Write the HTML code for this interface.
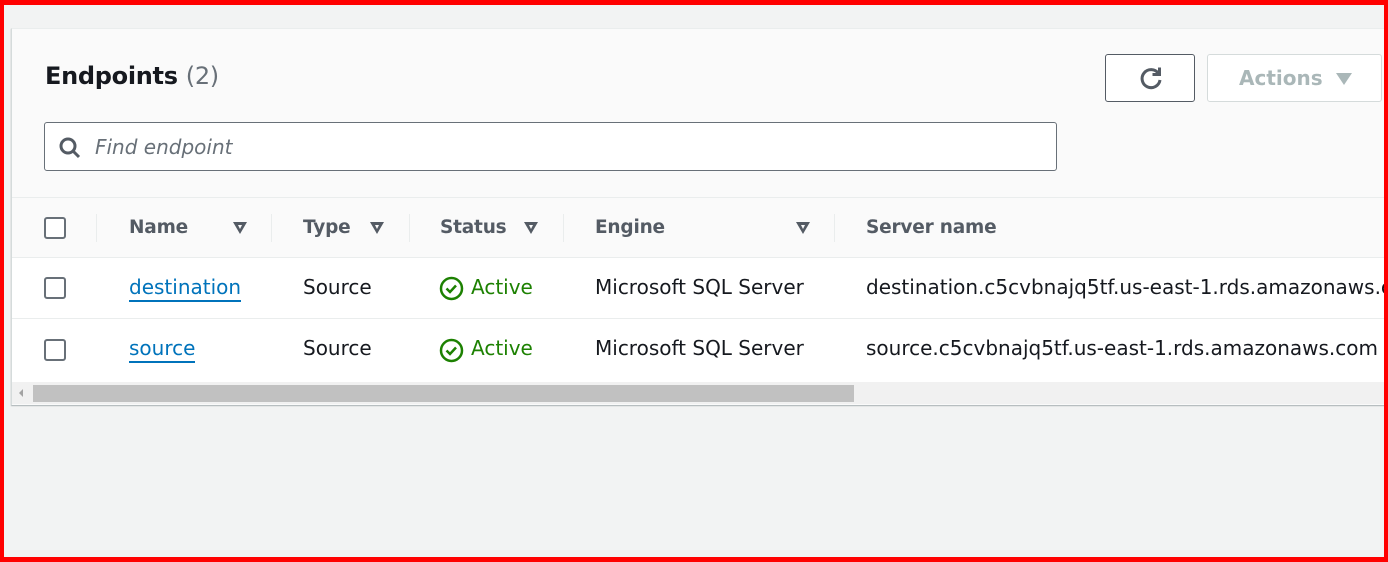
<!DOCTYPE html>
<html><head><meta charset="utf-8"><style>
*{box-sizing:border-box;margin:0;padding:0}
body{width:1388px;height:562px;overflow:hidden;background:#f2f3f3;font-family:"DejaVu Sans","Liberation Sans",sans-serif;position:relative}
.frame{position:absolute;left:0;top:0;width:1388px;height:562px;border:4px solid #f00;border-top-width:5px;border-bottom-width:5px;z-index:10;pointer-events:none}
.card{position:absolute;left:11px;top:28px;width:1377px;height:377px;background:#fafafa;border-left:1px solid #d5dbdb;border-top:1px solid #eaeded;box-shadow:0 1px 1px rgba(0,28,36,.3);overflow:hidden}
.abs{position:absolute}
h1{position:absolute;left:33px;top:33px;font-size:24px;font-weight:bold;color:#16191f;white-space:nowrap;letter-spacing:-0.3px}
h1 span{font-weight:normal;color:#687078}
.search{position:absolute;left:32px;top:93px;width:1013px;height:49px;background:#fff;border:1px solid #687078;border-radius:3px}
.search .ph{position:absolute;left:50px;top:12px;font-size:20px;font-style:italic;color:#687078}
.btn{position:absolute;top:25px;height:48px;border-radius:3px;background:#fff}
.hdr{position:absolute;left:0;top:168px;width:1376px;height:61px;border-top:1px solid #eaeded;border-bottom:1px solid #eaeded}
.row{position:absolute;left:0;width:1376px;height:62px;background:#fff;border-bottom:1px solid #eaeded}
.cb{position:absolute;left:32px;width:22px;height:22px;border:2px solid #687078;border-radius:3px;background:#fff}
.th{position:absolute;top:19px;font-size:18.5px;font-weight:bold;color:#545b64;white-space:nowrap;letter-spacing:-0.2px}
.tri{position:absolute;top:24px;width:0;height:0;border-left:7px solid transparent;border-right:7px solid transparent;border-top:12px solid #545b64}
.tri:after{content:"";position:absolute;left:-2px;top:-9px;border-left:2px solid transparent;border-right:2px solid transparent;border-top:4px solid #fafafa}
.div{position:absolute;top:16px;width:1px;height:28px;background:#eaeded}
.td{position:absolute;top:17px;font-size:20px;color:#16191f;white-space:nowrap}
.lnk{color:#0073bb;border-bottom:2px solid #0073bb;padding-bottom:1px}
.act{color:#1d8102}
</style></head><body>
<div class="frame"></div>
<div class="card">
<h1>Endpoints <span>(2)</span></h1>
<div class="search">
<svg class="abs" style="left:13px;top:13px" width="24" height="24" viewBox="0 0 24 24"><circle cx="10" cy="10" r="7" fill="none" stroke="#545b64" stroke-width="3"/><line x1="15" y1="15" x2="21" y2="21" stroke="#545b64" stroke-width="3"/></svg>
<div class="ph">Find endpoint</div></div>
<div class="btn" style="left:1093px;width:90px;border:1px solid #545b64">
<svg class="abs" style="left:31px;top:10px" width="28" height="28" viewBox="0 0 28 28"><path d="M21.5 8.5 A9 9 0 1 0 23 15" fill="none" stroke="#545b64" stroke-width="3"/><path d="M15.5 9.5 L22.5 9.5 L22.5 2.5" fill="none" stroke="#545b64" stroke-width="3"/></svg></div>
<div class="btn" style="left:1195px;width:175px;border:1px solid #d5dbdb">
<span class="abs" style="left:31px;top:11px;font-size:20px;font-weight:bold;color:#aab7b8">Actions</span>
<div class="abs" style="left:128px;top:18px;border-left:8px solid transparent;border-right:8px solid transparent;border-top:12px solid #aab7b8"></div></div>

<div class="hdr">
<div class="cb" style="top:19px"></div>
<div class="div" style="left:84px"></div>
<div class="th" style="left:117px">Name</div><div class="tri" style="left:221px"></div>
<div class="div" style="left:259px"></div>
<div class="th" style="left:291px">Type</div><div class="tri" style="left:358px"></div>
<div class="div" style="left:397px"></div>
<div class="th" style="left:428px">Status</div><div class="tri" style="left:512px"></div>
<div class="div" style="left:551px"></div>
<div class="th" style="left:583px">Engine</div><div class="tri" style="left:784px"></div>
<div class="div" style="left:822px"></div>
<div class="th" style="left:854px">Server name</div>
</div>

<div class="row" style="top:229px;height:61px">
<div class="cb" style="top:19px"></div>
<div class="td" style="left:117px"><span class="lnk">destination</span></div>
<div class="td" style="left:291px">Source</div>
<svg class="abs" style="left:427px;top:18px" width="25" height="25" viewBox="0 0 25 25"><circle cx="12.5" cy="12.5" r="10.5" fill="none" stroke="#1d8102" stroke-width="2.5"/><path d="M7.5 12.5 L11 16 L17 9.5" fill="none" stroke="#1d8102" stroke-width="2.5"/></svg>
<div class="td act" style="left:459px">Active</div>
<div class="td" style="left:583px">Microsoft SQL Server</div>
<div class="td" style="left:854px">destination.c5cvbnajq5tf.us-east-1.rds.amazonaws.com</div>
</div>
<div class="row" style="top:290px;height:63px;border-bottom:none">
<div class="cb" style="top:20px"></div>
<div class="td" style="left:117px"><span class="lnk">source</span></div>
<div class="td" style="left:291px">Source</div>
<svg class="abs" style="left:427px;top:19px" width="25" height="25" viewBox="0 0 25 25"><circle cx="12.5" cy="12.5" r="10.5" fill="none" stroke="#1d8102" stroke-width="2.5"/><path d="M7.5 12.5 L11 16 L17 9.5" fill="none" stroke="#1d8102" stroke-width="2.5"/></svg>
<div class="td act" style="left:459px">Active</div>
<div class="td" style="left:583px">Microsoft SQL Server</div>
<div class="td" style="left:854px">source.c5cvbnajq5tf.us-east-1.rds.amazonaws.com</div>
</div>
<div class="abs" style="left:0;top:353px;width:1376px;height:22px;background:#f1f1f1">
<div class="abs" style="left:7px;top:7px;border-top:4px solid transparent;border-bottom:4px solid transparent;border-right:4px solid #a3a3a3"></div>
<div class="abs" style="left:21px;top:3px;width:821px;height:17px;background:#c1c1c1"></div>
</div>
</div>
</body></html>
